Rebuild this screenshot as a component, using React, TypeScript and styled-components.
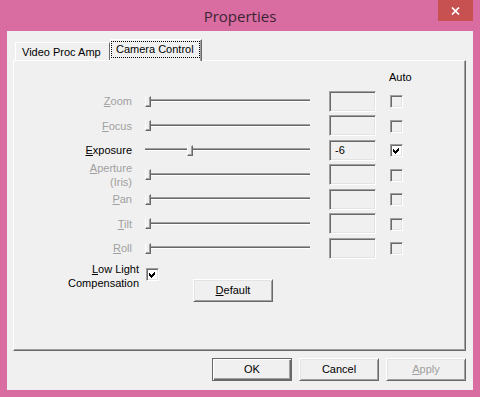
import React from "react";
import styled, { createGlobalStyle, css } from "styled-components";

const Global = createGlobalStyle`
  html, body { margin: 0; padding: 0; }
  body { width: 480px; height: 397px; overflow: hidden; background: #d96ca1; }
`;

const Window = styled.div`
  width: 480px;
  height: 397px;
  box-sizing: border-box;
  background: #d96ca1;
  padding: 0 7px 7px;
  display: flex;
  flex-direction: column;
`;

const TitleBar = styled.div`
  height: 31px;
  flex: none;
  display: grid;
  grid-template-columns: 1fr auto 1fr;
  align-items: start;
`;

const Title = styled.div`
  grid-column: 2;
  padding-top: 6px;
  font: 15px/20px "Open Sans", "Noto Sans", sans-serif;
  color: #3b2535;
`;

const CloseButton = styled.div`
  grid-column: 3;
  justify-self: end;
  width: 35px;
  height: 21px;
  background: #c75050;
  display: flex;
  align-items: center;
  justify-content: center;
`;

const Client = styled.div`
  flex: 1;
  background: #f0f0f0;
  padding: 8px 7px 9px 6px;
  display: flex;
  flex-direction: column;
  font: 11px/14px "Liberation Sans", Arial, sans-serif;
  color: #000;
`;

const TabStrip = styled.div`
  height: 21px;
  flex: none;
  display: flex;
  align-items: flex-end;
  position: relative;
  z-index: 1;
`;

const Tab = styled.div<{ $active?: boolean }>`
  box-sizing: border-box;
  background: #f0f0f0;
  border-top: 1px solid #fff;
  border-left: 1px solid #fff;
  border-right: 1px solid #696969;
  white-space: nowrap;
  ${(p) =>
    p.$active
      ? css`
          width: 92px;
          height: 22px;
          margin-bottom: -1px;
          padding: 2px 2px 0 1px;
          box-shadow: inset -1px 0 #a0a0a0;
        `
      : css`
          margin-left: 2px;
          width: 95px;
          height: 18px;
          padding: 2px 0 0 6px;
        `}
`;

const FocusLabel = styled.span`
  display: block;
  height: 14px;
  padding: 0 3px 1px 4px;
  outline: 1px dotted #000;
  outline-offset: 0;
  line-height: 14px;
`;

const Panel = styled.div`
  flex: none;
  height: 291px;
  box-sizing: border-box;
  border: 1px solid;
  border-color: #fff #696969 #696969 #fff;
  box-shadow: inset -1px -1px #a0a0a0;
  padding-top: 9px;
  display: flex;
  flex-direction: column;
`;

const ControlGrid = styled.div`
  display: grid;
  grid-template-columns: 118px 178px 66px 27px;
  grid-template-rows: 17px;
  grid-auto-rows: 21px;
  row-gap: 3.5px;
`;

const Header = styled.div`
  grid-column: 4;
  grid-row: 1;
  margin-left: 13px;
  align-self: start;
  white-space: nowrap;
`;

const Label = styled.div<{ $disabled?: boolean }>`
  grid-column: 1;
  justify-self: end;
  align-self: center;
  text-align: right;
  white-space: nowrap;
  color: ${(p) => (p.$disabled ? "#a0a0a0" : "#000")};
`;

const Slider = styled.div`
  grid-column: 2;
  margin-left: 13px;
  width: 165px;
  position: relative;
  display: flex;
  align-items: center;
`;

const Track = styled.div`
  flex: 1;
  height: 1px;
  background: #696969;
  border-top: 1px solid #a0a0a0;
  border-bottom: 1px solid #fff;
  margin-top: -1px;
`;

const Thumb = styled.div`
  position: absolute;
  top: 5px;
  width: 6px;
  height: 11px;
  box-sizing: border-box;
  background: #f0f0f0;
  border-left: 1px solid #fff;
  border-top: 1px solid #f0f0f0;
  border-right: 1px solid #696969;
  border-bottom: 1px solid #696969;
  box-shadow: inset -1px -1px #a0a0a0;
`;

const Edit = styled.div`
  grid-column: 3;
  margin-left: 19px;
  width: 47px;
  height: 21px;
  box-sizing: border-box;
  border: 1px solid;
  border-color: #a0a0a0 #fff #fff #a0a0a0;
  box-shadow: inset 1px 1px #696969, inset -1px -1px #e3e3e3;
  background: #f0f0f0;
  padding: 2px 0 0 5px;
  line-height: 15px;
`;

const CheckBox = styled.div<{ $enabled?: boolean }>`
  width: 13px;
  height: 13px;
  box-sizing: border-box;
  border: 1px solid;
  border-color: #a0a0a0 #fff #fff #a0a0a0;
  box-shadow: inset 1px 1px #696969, inset -1px -1px #e3e3e3;
  background: ${(p) => (p.$enabled ? "#fff" : "#f0f0f0")};
  padding: 1px 0 0 1px;
  display: flex;
`;

const GridCheck = styled.div`
  grid-column: 4;
  margin-left: 14px;
  align-self: center;
  margin-top: 1px;
`;

const BottomArea = styled.div`
  display: flex;
  align-items: flex-start;
  margin-top: 3.5px;
`;

const TwoLineLabel = styled.div`
  width: 125px;
  text-align: right;
  white-space: nowrap;
`;

const InlineCheck = styled.div`
  margin: 6px 0 0 7px;
`;

const Button = styled.button<{ $primary?: boolean; $disabled?: boolean }>`
  appearance: none;
  width: 80px;
  height: 23px;
  box-sizing: border-box;
  margin: 0;
  padding: 0 0 1px;
  background: #f0f0f0;
  font: 11px/14px "Liberation Sans", Arial, sans-serif;
  color: ${(p) => (p.$disabled ? "#a0a0a0" : "#000")};
  border: 1px solid;
  ${(p) =>
    p.$primary
      ? css`
          border-color: #696969;
          box-shadow: inset 1px 1px #fff, inset -1px -1px #696969, inset -2px -2px #a0a0a0;
        `
      : css`
          border-color: #fff #696969 #696969 #fff;
          box-shadow: inset 1px 1px #e3e3e3, inset -1px -1px #a0a0a0;
        `}
`;

const DefaultButton = styled(Button)`
  margin: 17px 0 0 34px;
`;

const ButtonRow = styled.div`
  flex: none;
  display: flex;
  justify-content: flex-end;
  gap: 7px;
  margin-top: 7px;
`;

const CheckMark = () => (
  <svg width="9" height="9" viewBox="0 0 9 9" shapeRendering="crispEdges">
    <polygon points="1,3 3,5 7,1 7,4 3,8 1,6" fill="#000" />
  </svg>
);

type Row = {
  label: React.ReactNode;
  enabled: boolean;
  value?: string;
  pos: number;
  auto: boolean;
};

const rows: Row[] = [
  { label: <><u>Z</u>oom</>, enabled: false, pos: 0, auto: false },
  { label: <><u>F</u>ocus</>, enabled: false, pos: 0, auto: false },
  { label: <><u>E</u>xposure</>, enabled: true, value: "-6", pos: 42, auto: true },
  { label: <><u>A</u>perture<br />(Iris)</>, enabled: false, pos: 0, auto: false },
  { label: <><u>P</u>an</>, enabled: false, pos: 0, auto: false },
  { label: <><u>T</u>ilt</>, enabled: false, pos: 0, auto: false },
  { label: <><u>R</u>oll</>, enabled: false, pos: 0, auto: false },
];

export default function App() {
  return (
    <>
      <Global />
      <Window>
        <TitleBar>
          <Title>Properties</Title>
          <CloseButton>
            <svg width="9" height="8" viewBox="0 0 9 8">
              <path d="M1 0.5 L8 7.5 M8 0.5 L1 7.5" stroke="#fff" strokeWidth="1.7" />
            </svg>
          </CloseButton>
        </TitleBar>
        <Client>
          <TabStrip>
            <Tab>Video Proc Amp</Tab>
            <Tab $active>
              <FocusLabel>Camera Control</FocusLabel>
            </Tab>
          </TabStrip>
          <Panel>
            <ControlGrid>
              <Header>Auto</Header>
              {rows.map((r, i) => (
                <React.Fragment key={i}>
                  <Label $disabled={!r.enabled} style={{ gridRow: i + 2 }}>
                    {r.label}
                  </Label>
                  <Slider style={{ gridRow: i + 2 }}>
                    <Track />
                    <Thumb style={{ left: r.pos }} />
                  </Slider>
                  <Edit style={{ gridRow: i + 2 }}>{r.value ?? ""}</Edit>
                  <GridCheck style={{ gridRow: i + 2 }}>
                    <CheckBox $enabled={r.enabled}>{r.auto && <CheckMark />}</CheckBox>
                  </GridCheck>
                </React.Fragment>
              ))}
            </ControlGrid>
            <BottomArea>
              <TwoLineLabel>
                <u>L</u>ow Light
                <br />
                Compensation
              </TwoLineLabel>
              <InlineCheck>
                <CheckBox $enabled>
                  <CheckMark />
                </CheckBox>
              </InlineCheck>
              <DefaultButton>
                <u>D</u>efault
              </DefaultButton>
            </BottomArea>
          </Panel>
          <ButtonRow>
            <Button $primary>OK</Button>
            <Button>Cancel</Button>
            <Button $disabled>
              <u>A</u>pply
            </Button>
          </ButtonRow>
        </Client>
      </Window>
    </>
  );
}
